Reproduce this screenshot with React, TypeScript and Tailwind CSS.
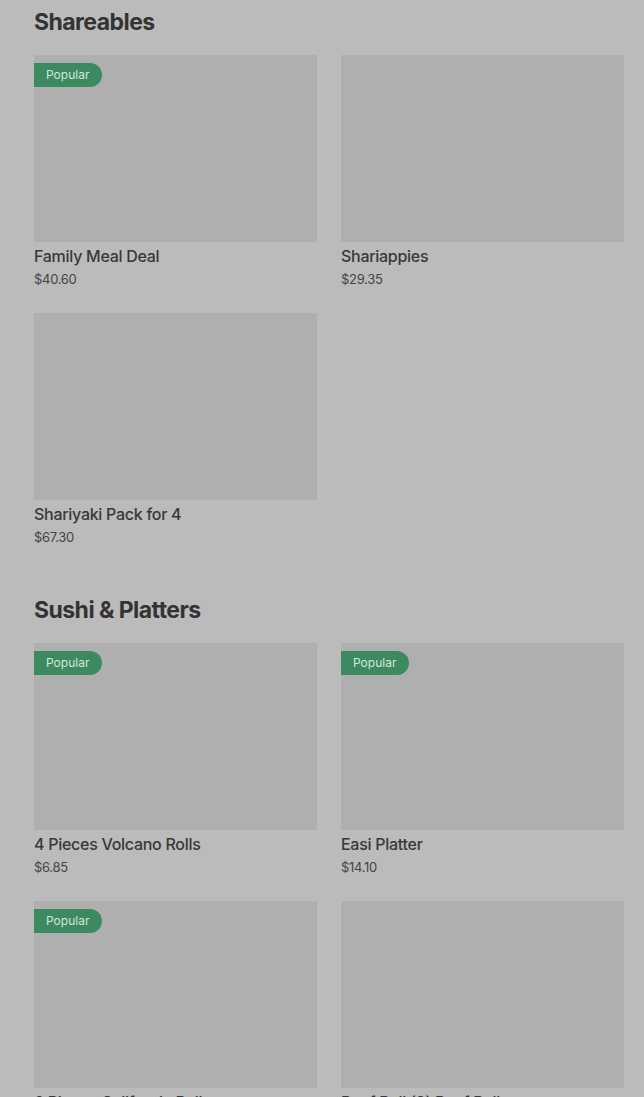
const sections = [
  {
    title: 'Shareables',
    items: [
      { name: 'Family Meal Deal', price: '$40.60', popular: true },
      { name: 'Shariappies', price: '$29.35', popular: false },
      { name: 'Shariyaki Pack for 4', price: '$67.30', popular: false },
    ],
  },
  {
    title: 'Sushi & Platters',
    items: [
      { name: '4 Pieces Volcano Rolls', price: '$6.85', popular: true },
      { name: 'Easi Platter', price: '$14.10', popular: true },
      { name: '6 Pieces California Rolls', price: '$7.95', popular: true },
      { name: 'Beef Roll (8) Beef Rolls', price: '$9.40', popular: false },
    ],
  },
]

function ItemCard({ name, price, popular }: { name: string; price: string; popular: boolean }) {
  return (
    <div className="flex flex-col">
      <div className="relative h-[187px] bg-[#afafaf]">
        {popular && (
          <span className="absolute left-0 top-[8px] h-[24px] pl-[12px] pr-[13px] flex items-center rounded-r-full bg-[#3d8a60] text-[12px] text-[#d0e8d8]">
            Popular
          </span>
        )}
      </div>
      <div className="mt-[3px] text-[16px] leading-[22px] font-medium tracking-[-0.28px] text-[#383838]">{name}</div>
      <div className="mt-[3px] text-[13px] leading-[18px] tracking-[-0.3px] text-[#454545]">{price}</div>
    </div>
  )
}

export default function App() {
  return (
    <div
      className="min-h-[1097px] bg-[#bbbbbb] pl-[34px] pr-[20px] pt-[6px] overflow-hidden"
      style={{ fontFamily: 'Inter, "Liberation Sans", sans-serif' }}
    >
      {sections.map((section) => (
        <section key={section.title} className="mb-[48px]">
          <h2 className="text-[23px] leading-[32px] font-bold tracking-[-0.55px] text-[#333333] mb-[17px]">
            {section.title}
          </h2>
          <div className="grid grid-cols-2 gap-x-[24px] gap-y-[25px]">
            {section.items.map((item) => (
              <ItemCard key={item.name} {...item} />
            ))}
          </div>
        </section>
      ))}
    </div>
  )
}
